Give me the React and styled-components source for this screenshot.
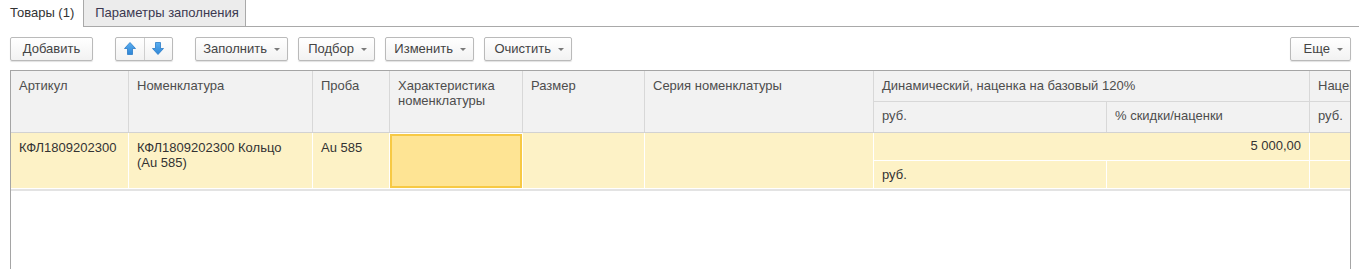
import React from "react"
import styled, { createGlobalStyle } from "styled-components"

const Global = createGlobalStyle`
  body {
    margin: 0;
    background: #fff;
    font-family: "Liberation Sans", Arial, sans-serif;
    font-size: 13px;
    color: #333;
    overflow: hidden;
  }
`

const Page = styled.div`
  width: 1359px;
  height: 269px;
  overflow: hidden;
`

const TabStrip = styled.div`
  display: flex;
  height: 26px;
  border-bottom: 1px solid #a9a9a9;
`

const Tab = styled.div`
  display: flex;
  align-items: center;
  box-sizing: border-box;
  height: 27px;
  margin-bottom: -1px;
  padding: 0 6px 2px 11px;
  white-space: nowrap;
  color: ${p => (p.$active ? "#333" : "#3b3850")};
  background: ${p => (p.$active ? "#fff" : "#ececec")};
  border: 1px solid ${p => (p.$active ? "transparent" : "#a9a9a9")};
  border-top: none;
  border-bottom-color: ${p => (p.$active ? "#fff" : "#a9a9a9")};
  ${p => p.$active && "border-left: none; padding-left: 10px; padding-right: 8px;"}
`

const Toolbar = styled.div`
  display: flex;
  align-items: center;
  gap: 22px;
  padding: 9px 8px 0 10px;
  height: 25px;
  margin-bottom: 9px;
`

const Group = styled.div`
  display: flex;
  gap: 10px;
`

const Button = styled.div`
  display: flex;
  align-items: center;
  justify-content: ${p => (p.$menu ? "flex-end" : "center")};
  box-sizing: border-box;
  width: ${p => p.$w}px;
  height: 24px;
  padding-right: ${p => (p.$menu ? "7px" : "0")};
  border: 1px solid #bababa;
  border-radius: 2px;
  background: linear-gradient(#ffffff, #f2f2f2);
  box-shadow: 0 1px 1px rgba(0, 0, 0, 0.12);
  color: #444;
  white-space: nowrap;
  margin-left: ${p => (p.$right ? "auto" : "0")};
`

const Caret = styled.span`
  width: 0;
  height: 0;
  margin-left: 7px;
  margin-top: 1px;
  border-left: 3px solid transparent;
  border-right: 3px solid transparent;
  border-top: 3px solid #7a7a7a;
`

const ArrowPair = styled.div`
  display: flex;
  box-sizing: border-box;
  width: 58px;
  height: 24px;
  border: 1px solid #bababa;
  border-radius: 2px;
  background: linear-gradient(#ffffff, #f2f2f2);
  box-shadow: 0 1px 1px rgba(0, 0, 0, 0.12);
`

const ArrowCell = styled.div`
  flex: 1;
  display: flex;
  align-items: center;
  justify-content: center;
  & + & {
    border-left: 1px solid #cfcfcf;
  }
`

const Arrow = ({ down }) => (
  <svg width="12" height="13" viewBox="0 0 12 13" style={{ transform: down ? "rotate(180deg)" : "none" }}>
    <defs>
      <linearGradient id={down ? "gd" : "gu"} x1="0" y1="0" x2="0" y2="1">
        <stop offset="0" stopColor={down ? "#2f86d6" : "#5aaef0"} />
        <stop offset="1" stopColor={down ? "#5aaef0" : "#2f86d6"} />
      </linearGradient>
    </defs>
    <polygon
      points="6,0.5 11.5,6.5 8.5,6.5 8.5,12.5 3.5,12.5 3.5,6.5 0.5,6.5"
      fill={`url(#${down ? "gd" : "gu"})`}
      stroke="#2b7cc8"
      strokeWidth="0.8"
      strokeLinejoin="round"
    />
  </svg>
)

const Table = styled.div`
  margin: 0 8px 0 10px;
  height: 220px;
  border: 1px solid #a5a5a5;
  border-bottom: none;
  overflow: hidden;
`

const cols = "117px 183px 76px 132px 121px 228px 232px 202px 100px"

const Head = styled.div`
  display: grid;
  grid-template-columns: ${cols};
  grid-template-rows: 30px 30px;
  gap: 1px;
  background: #d8d8d8;
  border-bottom: 1px solid #d2d2d2;
`

const HeadCell = styled.div`
  grid-column: ${p => p.$col};
  grid-row: ${p => p.$row || "auto"};
  background: #f2f2f2;
  color: #4d4d4d;
  padding: ${p => p.$pt || 7}px 8px 0 8px;
  line-height: 15px;
  white-space: ${p => (p.$wrap ? "normal" : "nowrap")};
  overflow: hidden;
`

const Body = styled.div`
  display: grid;
  grid-template-columns: ${cols};
  grid-template-rows: 27px 27px;
  gap: 1px;
  padding: 0 0 1px;
  background: #fff;
  border-bottom: 2px solid #e3e3e3;
`

const Cell = styled.div`
  grid-column: ${p => p.$col};
  grid-row: ${p => p.$row || "auto"};
  background: ${p => (p.$selected ? "#fee494" : "#fdf2c6")};
  border: ${p => (p.$selected ? "2px solid #f7c944" : "none")};
  margin-top: ${p => (p.$selected ? "1px" : "0")};
  color: #333;
  padding: ${p => p.$pt || 7}px 8px 0 8px;
  line-height: 15px;
  text-align: ${p => (p.$right ? "right" : "left")};
  white-space: ${p => (p.$wrap ? "normal" : "nowrap")};
  overflow: hidden;
`

export default function App() {
  return (
    <Page>
      <Global />
      <TabStrip>
        <Tab $active>Товары (1)</Tab>
        <Tab>Параметры заполнения</Tab>
      </TabStrip>

      <Toolbar>
        <Button $w={83}>Добавить</Button>
        <ArrowPair>
          <ArrowCell>
            <Arrow />
          </ArrowCell>
          <ArrowCell>
            <Arrow down />
          </ArrowCell>
        </ArrowPair>
        <Group>
          <Button $menu $w={93}>
            Заполнить<Caret />
          </Button>
          <Button $menu $w={77}>
            Подбор<Caret />
          </Button>
          <Button $menu $w={89}>
            Изменить<Caret />
          </Button>
          <Button $menu $w={88}>
            Очистить<Caret />
          </Button>
        </Group>
        <Button $menu $right $w={61}>
          Еще<Caret />
        </Button>
      </Toolbar>

      <Table>
        <Head>
          <HeadCell $col="1" $row="1 / 3">Артикул</HeadCell>
          <HeadCell $col="2" $row="1 / 3">Номенклатура</HeadCell>
          <HeadCell $col="3" $row="1 / 3">Проба</HeadCell>
          <HeadCell $col="4" $row="1 / 3" $wrap>
            Характеристика номенклатуры
          </HeadCell>
          <HeadCell $col="5" $row="1 / 3">Размер</HeadCell>
          <HeadCell $col="6" $row="1 / 3">Серия номенклатуры</HeadCell>
          <HeadCell $col="7 / 9" $row="1">
            Динамический, наценка на базовый 120%
          </HeadCell>
          <HeadCell $col="9" $row="1">Наценка</HeadCell>
          <HeadCell $col="7" $row="2" $pt={6}>руб.</HeadCell>
          <HeadCell $col="8" $row="2" $pt={6}>% скидки/наценки</HeadCell>
          <HeadCell $col="9" $row="2" $pt={6}>руб.</HeadCell>
        </Head>

        <Body>
          <Cell $col="1" $row="1 / 3">КФЛ1809202300</Cell>
          <Cell $col="2" $row="1 / 3" $wrap>
            КФЛ1809202300 Кольцо (Au 585)
          </Cell>
          <Cell $col="3" $row="1 / 3">Au 585</Cell>
          <Cell $col="4" $row="1 / 3" $selected />
          <Cell $col="5" $row="1 / 3" />
          <Cell $col="6" $row="1 / 3" />
          <Cell $col="7 / 9" $row="1" $right $pt={5}>
            5 000,00
          </Cell>
          <Cell $col="9" $row="1" />
          <Cell $col="7" $row="2" $pt={6}>руб.</Cell>
          <Cell $col="8" $row="2" />
          <Cell $col="9" $row="2" />
        </Body>
      </Table>
    </Page>
  )
}
